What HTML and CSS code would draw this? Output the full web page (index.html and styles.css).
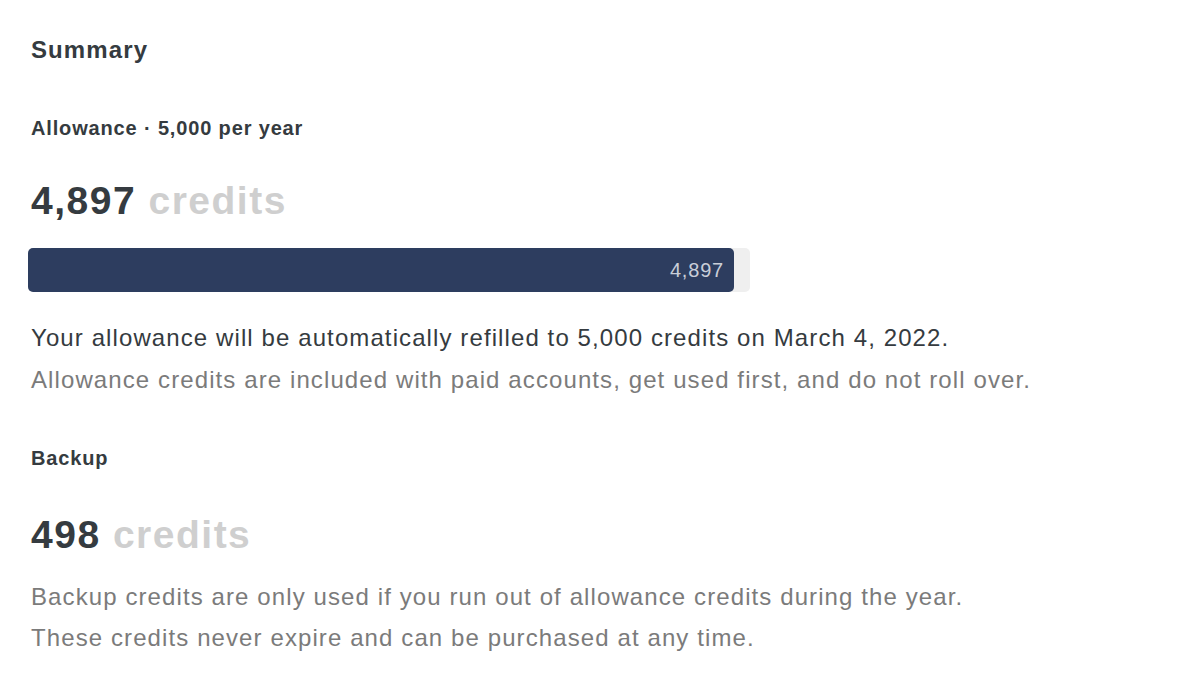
FILE: index.html
```html
<!DOCTYPE html>
<html>
<head>
<meta charset="utf-8">
<link rel="stylesheet" href="styles.css">
</head>
<body>
<main class="page">
  <h1 class="title">Summary</h1>
  <section class="block block-allowance">
    <h2 class="label">Allowance · 5,000 per year</h2>
    <div class="amount"><span class="num">4,897</span> <span class="unit">credits</span></div>
    <div class="track">
      <div class="fill" style="width: 706px"><span class="fill-label">4,897</span></div>
    </div>
    <div class="texts texts-allowance">
      <p class="text dark">Your allowance will be automatically refilled to 5,000 credits on March 4, 2022.</p>
      <p class="text muted">Allowance credits are included with paid accounts, get used first, and do not roll over.</p>
    </div>
  </section>
  <section class="block block-backup">
    <h2 class="label">Backup</h2>
    <div class="amount amount-backup"><span class="num">498</span> <span class="unit">credits</span></div>
    <div class="texts texts-backup">
      <p class="text muted">Backup credits are only used if you run out of allowance credits during the year.</p>
      <p class="text muted">These credits never expire and can be purchased at any time.</p>
    </div>
  </section>
</main>
</body>
</html>
```
FILE: styles.css
```css
* { box-sizing: border-box; }
html, body { margin: 0; padding: 0; background: #fff; }
body {
  font-family: "Liberation Sans", Arial, Helvetica, sans-serif;
  color: #353b40;
}
.page {
  padding: 33px 0 0 31px;
  width: 1200px;
}
.title {
  margin: 0;
  font-size: 24px;
  line-height: 34px;
  font-weight: 700;
  letter-spacing: 1.1px;
}
.label {
  margin: 0;
  font-size: 20px;
  line-height: 24px;
  font-weight: 700;
  letter-spacing: 0.85px;
}
.block-allowance { margin-top: 49px; }
.block-backup { margin-top: 45px; }
.amount {
  margin-top: 38px;
  font-size: 39px;
  line-height: 46px;
  font-weight: 700;
  letter-spacing: 1.5px;
}
.amount-backup { margin-top: 42px; }
.unit { color: #cfcfcf; }
.track {
  margin: 24px 0 0 -3px;
  width: 722px;
  height: 44px;
  background: #efefef;
  border-radius: 5px;
}
.fill {
  height: 44px;
  background: #2d3d5f;
  border-radius: 5px;
  display: flex;
  align-items: center;
  justify-content: flex-end;
  padding-right: 10px;
}
.fill-label {
  color: #c9ced8;
  font-size: 20px;
  letter-spacing: 0.8px;
}
.text {
  margin: 0;
  font-size: 24px;
  line-height: 42px;
  letter-spacing: 1.1px;
}
.texts-allowance { margin-top: 25px; }
.texts-backup { margin-top: 18px; }
.texts-backup .text { line-height: 41px; }
.dark { color: #353b40; }
.muted { color: #7b7b7b; }
```
